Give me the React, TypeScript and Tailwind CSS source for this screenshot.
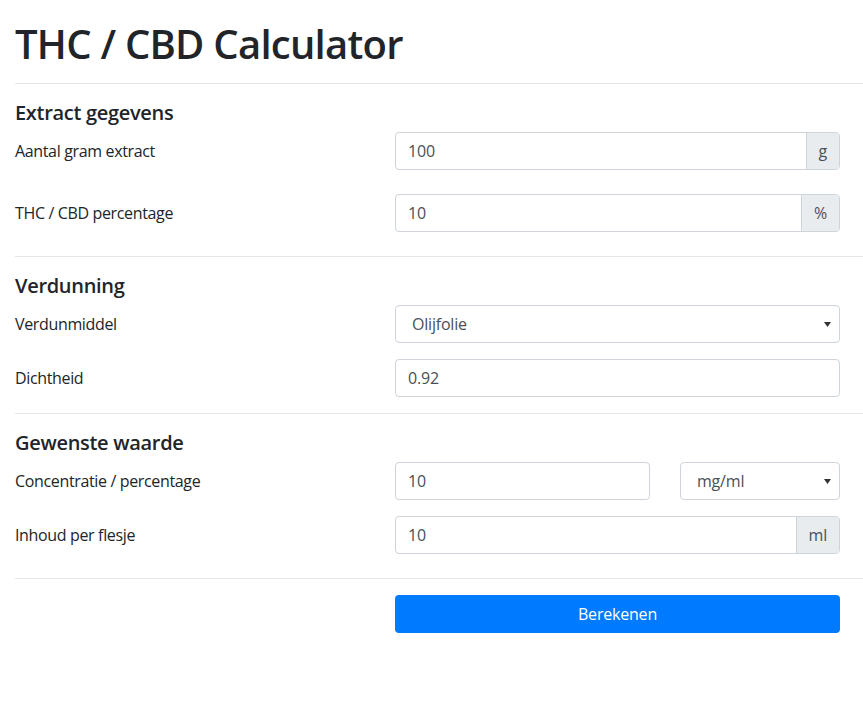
export default function App() {
  return (
    <div className="min-h-[726px] bg-white text-[#212529] font-['Open_Sans',sans-serif] overflow-hidden">
      <div className="pl-[15px]">
        <h1 className="pt-[20px] text-[40px] leading-[48px] font-semibold tracking-[-0.75px] mb-2">THC / CBD Calculator</h1>
        <hr className="mt-[15px] border-t border-[#e5e5e5]" />

        <Section title="Extract gegevens" gap="gap-6">
          <Row label="Aantal gram extract">
            <InputGroup value="100" addon="g" />
          </Row>
          <Row label="THC / CBD percentage">
            <InputGroup value="10" addon="%" />
          </Row>
        </Section>
        <hr className="mt-6 border-t border-[#e5e5e5]" />

        <Section title="Verdunning" gap="gap-4">
          <Row label="Verdunmiddel">
            <Select value="Olijfolie" />
          </Row>
          <Row label="Dichtheid">
            <Input value="0.92" />
          </Row>
        </Section>
        <hr className="mt-4 border-t border-[#e5e5e5]" />

        <Section title="Gewenste waarde" gap="gap-4">
          <Row label="Concentratie / percentage">
            <div className="flex gap-[30px]">
              <div className="w-[255px]">
                <Input value="10" />
              </div>
              <div className="w-[160px]">
                <Select value="mg/ml" />
              </div>
            </div>
          </Row>
          <Row label="Inhoud per flesje">
            <InputGroup value="10" addon="ml" />
          </Row>
        </Section>
        <hr className="mt-6 border-t border-[#e5e5e5]" />

        <div className="flex pt-4">
          <div className="w-[380px]" />
          <button className="w-[445px] h-[38px] rounded bg-[#007bff] text-white text-base tracking-[-0.2px]">
            Berekenen
          </button>
        </div>
      </div>
    </div>
  );
}

function Section({ title, gap, children }: { title: string; gap: string; children: React.ReactNode }) {
  return (
    <div className="pt-[17px]">
      <h5 className="text-[20px] leading-6 font-semibold tracking-[-0.3px] mb-[7px]">{title}</h5>
      <div className={`flex flex-col ${gap}`}>{children}</div>
    </div>
  );
}

function Row({ label, children }: { label: string; children: React.ReactNode }) {
  return (
    <div className="flex items-center">
      <label className="w-[380px] text-base leading-6 tracking-[-0.35px]">{label}</label>
      <div className="w-[445px]">{children}</div>
    </div>
  );
}

function Input({ value }: { value: string }) {
  return (
    <div className="h-[38px] flex items-center px-3 border border-[#ced4da] rounded text-base text-[#495057] tracking-[-0.2px]">
      {value}
    </div>
  );
}

function InputGroup({ value, addon }: { value: string; addon: string }) {
  return (
    <div className="flex h-[38px] border border-[#ced4da] rounded overflow-hidden text-base text-[#495057] tracking-[-0.2px]">
      <div className="flex-1 flex items-center px-3">{value}</div>
      <div className="flex items-center px-3 bg-[#e9ecef] border-l border-[#ced4da]">{addon}</div>
    </div>
  );
}

function Select({ value }: { value: string }) {
  return (
    <div className="h-[38px] flex items-center justify-between pl-4 pr-[8px] border border-[#ced4da] rounded text-base text-[#495057] tracking-[-0.2px]">
      <span>{value}</span>
      <svg width="7" height="5" viewBox="0 0 7 5">
        <path d="M0 0 L7 0 L3.5 5 Z" fill="#333" />
      </svg>
    </div>
  );
}
